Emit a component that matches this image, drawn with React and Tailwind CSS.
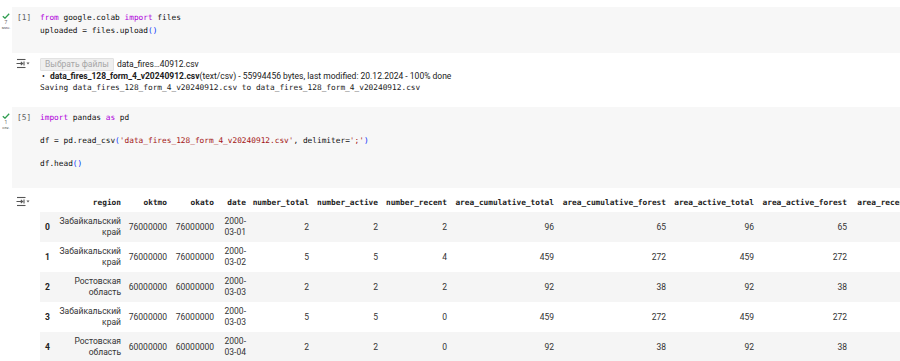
import React from 'react';

const mono = { fontFamily: '"DejaVu Sans Mono", monospace' };

const CheckStatus = ({ num, unit }) => (
    <div className="w-[12px] flex flex-col items-center pt-[6px] text-[#666]">
        <svg width="8" height="6" viewBox="0 0 8 6">
            <path d="M0.8 3.2 L3 5.2 L7.2 0.8" fill="none" stroke="#2e9d4f" strokeWidth="1.3" />
        </svg>
        <span className="text-[5px] leading-[6px] font-['Roboto',sans-serif]">{num}</span>
        <span className="text-[4px] leading-[5px] font-['Roboto',sans-serif]">{unit}</span>
    </div>
);

const OutputIcon = () => (
    <svg width="14" height="11" viewBox="0 0 14 11" className="mt-[1px]">
        <path d="M1 1.5 H9.5" stroke="#555" strokeWidth="1.1" />
        <path d="M0.5 5.5 H6.5 M4.8 3.8 L6.6 5.5 L4.8 7.2 M8 3.5 V7.5" fill="none" stroke="#555" strokeWidth="1.1" />
        <path d="M1 9.5 H9.5" stroke="#555" strokeWidth="1.1" />
        <path d="M10.5 4.6 H13.5 L12 6.4 Z" fill="#555" />
    </svg>
);

const columns = [
    { key: 'idx', label: '', width: 12 },
    { key: 'region', label: 'region', width: 72 },
    { key: 'oktmo', label: 'oktmo', width: 46 },
    { key: 'okato', label: 'okato', width: 47 },
    { key: 'date', label: 'date', width: 32 },
    { key: 'nt', label: 'number_total', width: 63 },
    { key: 'na', label: 'number_active', width: 69 },
    { key: 'nr', label: 'number_recent', width: 69 },
    { key: 'act', label: 'area_cumulative_total', width: 107 },
    { key: 'acf', label: 'area_cumulative_forest', width: 112 },
    { key: 'aat', label: 'area_active_total', width: 88 },
    { key: 'aaf', label: 'area_active_forest', width: 93 },
    { key: 'art', label: 'area_recent_total', width: 90 },
];

const rows = [
    ['0', 'Забайкальский край', '76000000', '76000000', '2000-03-01', '2', '2', '2', '96', '65', '96', '65', '0'],
    ['1', 'Забайкальский край', '76000000', '76000000', '2000-03-02', '5', '5', '4', '459', '272', '459', '272', '0'],
    ['2', 'Ростовская область', '60000000', '60000000', '2000-03-03', '2', '2', '2', '92', '38', '92', '38', '0'],
    ['3', 'Забайкальский край', '76000000', '76000000', '2000-03-03', '5', '5', '0', '459', '272', '459', '272', '0'],
    ['4', 'Ростовская область', '60000000', '60000000', '2000-03-04', '2', '2', '0', '92', '38', '92', '38', '0'],
];

const renderValue = (value, colIndex) => {
    if (colIndex === 1) {
        const [a, b] = value.split(' ');
        return (<>{a}<br />{b}</>);
    }
    if (colIndex === 4) {
        return (<>{value.slice(0, 5)}<br />{value.slice(5)}</>);
    }
    return value;
};

export default function App() {
    return (
        <div className="w-[900px] h-[361px] overflow-hidden bg-white text-[#212121] font-['Roboto',sans-serif]">
            {/* Cell 1 */}
            <div className="flex mt-[7px]">
                <CheckStatus num="7" unit="мин." />
                <div className="flex-1 bg-[#f7f7f7] h-[46px] flex pt-[5px]">
                    <div className="w-[28px] pl-[5px] text-[7.8px] leading-[12.5px] text-[#616161]" style={mono}>[1]</div>
                    <div className="text-[7.8px] leading-[12.5px] text-[#111]" style={mono}>
                        <div><span className="text-[#af00db]">from</span> google.colab <span className="text-[#af00db]">import</span> files</div>
                        <div>uploaded = files.upload<span className="text-[#0431fa]">()</span></div>
                    </div>
                </div>
            </div>

            {/* Output 1 */}
            <div className="flex pt-[4px] h-[54px]">
                <div className="w-[40px] pl-[16px]"><OutputIcon /></div>
                <div className="text-[8.5px]">
                    <div className="flex items-center gap-[3px] h-[13px] mt-[1px]">
                        <span className="h-[13px] px-[4px] flex items-center bg-[#efefef] border border-[#e2e2e2] rounded-[1px] text-[#a6a6a6]">Выбрать файлы</span>
                        <span>data_fires…40912.csv</span>
                    </div>
                    <div className="flex items-center h-[11px] pl-[2px]">
                        <span className="w-[8px]">•</span>
                        <span className="font-bold">data_fires_128_form_4_v20240912.csv</span>
                        <span>(text/csv) - 55994456 bytes, last modified: 20.12.2024 - 100% done</span>
                    </div>
                    <div className="text-[7.8px] leading-[12px]" style={mono}>Saving data_fires_128_form_4_v20240912.csv to data_fires_128_form_4_v20240912.csv</div>
                </div>
            </div>

            {/* Cell 2 */}
            <div className="flex">
                <CheckStatus num="1" unit="сек." />
                <div className="flex-1 bg-[#f7f7f7] h-[81px] flex pt-[5px]">
                    <div className="w-[28px] pl-[5px] text-[7.8px] leading-[11.5px] text-[#616161]" style={mono}>[5]</div>
                    <div className="text-[7.8px] leading-[11.5px] text-[#111]" style={mono}>
                        <div><span className="text-[#af00db]">import</span> pandas <span className="text-[#af00db]">as</span> pd</div>
                        <div>&nbsp;</div>
                        <div>df = pd.read_csv<span className="text-[#0431fa]">(</span><span className="text-[#a31515]">'data_fires_128_form_4_v20240912.csv'</span>, delimiter=<span className="text-[#a31515]">';'</span><span className="text-[#0431fa]">)</span></div>
                        <div>&nbsp;</div>
                        <div>df.head<span className="text-[#0431fa]">()</span></div>
                    </div>
                </div>
            </div>

            {/* Output 2 */}
            <div className="flex pt-[5px]">
                <div className="w-[40px] shrink-0 pl-[16px] pt-[2px]"><OutputIcon /></div>
                <table className="table-fixed border-collapse shrink-0 w-[900px]">
                    <colgroup>
                        {columns.map((c) => (
                            <col key={c.key} style={{ width: c.width }} />
                        ))}
                    </colgroup>
                    <thead>
                        <tr className="h-[19px]">
                            {columns.map((c) => (
                                <th key={c.key} className="text-right px-[3px] text-[7.8px] font-bold leading-[11px] whitespace-nowrap" style={mono}>
                                    {c.label}
                                </th>
                            ))}
                        </tr>
                    </thead>
                    <tbody>
                        {rows.map((row, i) => (
                            <tr key={i} className={i % 2 === 0 ? 'h-[30px] bg-[#f5f5f5]' : 'h-[30px] bg-white'}>
                                {row.map((v, j) => (
                                    <td
                                        key={j}
                                        className={j === 0
                                            ? 'text-left pl-[5px] text-[8.5px] font-bold leading-[11px]'
                                            : 'text-right px-[3px] text-[8.5px] leading-[11px] text-[#333] whitespace-nowrap'}
                                    >
                                        {renderValue(v, j)}
                                    </td>
                                ))}
                            </tr>
                        ))}
                    </tbody>
                </table>
            </div>
        </div>
    );
}
